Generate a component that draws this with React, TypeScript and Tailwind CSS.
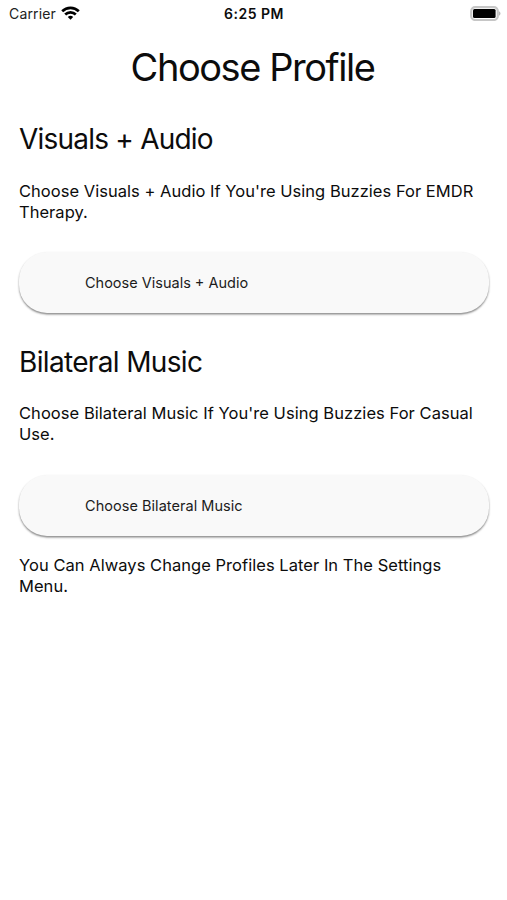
const profiles = [
  {
    title: 'Visuals + Audio',
    description: "Choose Visuals + Audio If You're Using Buzzies For EMDR Therapy.",
    action: 'Choose Visuals + Audio',
    sectionClass: 'h-[222px] pt-[30px]',
    titleClass: 'tracking-[-0.78px]',
    descriptionClass: 'mt-[24px] tracking-[0.03px]',
    actionClass: 'mt-[29px]',
  },
  {
    title: 'Bilateral Music',
    description: "Choose Bilateral Music If You're Using Buzzies For Casual Use.",
    action: 'Choose Bilateral Music',
    sectionClass: 'h-[224px] pt-[31px]',
    titleClass: 'tracking-[-0.66px]',
    descriptionClass: 'mt-[23px] tracking-[0.05px]',
    actionClass: 'mt-[30px] tracking-[0.04px]',
  },
];

function StatusBar() {
  return (
    <div className="grid h-[26px] grid-cols-3 items-center pl-[9px] pr-[6px] text-[14px]">
      <div className="flex items-center gap-[5px] text-[#222]">
        <span className="tracking-[0.15px]">Carrier</span>
        <svg className="h-[14px] w-[19px]" viewBox="0 0 19 14" fill="none" stroke="#000" strokeWidth="2.7">
          <path d="M1.2 5.2a11.8 11.8 0 0 1 16.6 0" />
          <path d="M4.2 8.5a7.6 7.6 0 0 1 10.6 0" />
          <path d="M9.5 13.8l-2.7-2.9a4 4 0 0 1 5.4 0z" fill="#000" stroke="none" />
        </svg>
      </div>
      <span className="pr-[2px] text-center font-semibold tracking-[0.5px]">6:25 PM</span>
      <svg className="h-[15px] w-[31px] justify-self-end" viewBox="0 0 31 15">
        <rect x="1.2" y="1.2" width="26.6" height="12.8" rx="4" fill="none" stroke="#c6c6c6" strokeWidth="2.2" />
        <rect x="3" y="3" width="22.6" height="9" rx="1.5" fill="#000" />
        <path d="M29 5.3c2 .8 2 3.6 0 4.4z" fill="#b8b8b8" />
      </svg>
    </div>
  );
}

export default function App() {
  return (
    <div className="h-[900px] w-[507px] overflow-hidden bg-white font-['Inter',sans-serif] text-[#0c0c0c]">
      <StatusBar />
      <main className="px-[19px]">
        <h1 className="mt-[17px] pr-[2px] text-center text-[38px] leading-[48px] tracking-[-1.45px]">
          Choose Profile
        </h1>
        {profiles.map(profile => (
          <section key={profile.title} className={profile.sectionClass}>
            <h2 className={`text-[28px] leading-9 ${profile.titleClass}`}>{profile.title}</h2>
            <p className={`text-[16.5px] leading-[21px] ${profile.descriptionClass}`}>
              {profile.description}
            </p>
            <button
              className={`block h-[61px] w-[470px] rounded-[28px] bg-[#f9f9f9] pl-[66px] text-left text-[14.5px] text-[#1c1c1c] shadow-[0_1.5px_2px_rgba(0,0,0,0.45)] ${profile.actionClass}`}
            >
              {profile.action}
            </button>
          </section>
        ))}
        <p className="mt-[18px] text-[16.5px] leading-[21px] tracking-[0.04px]">
          You Can Always Change Profiles Later In The Settings Menu.
        </p>
      </main>
    </div>
  );
}
